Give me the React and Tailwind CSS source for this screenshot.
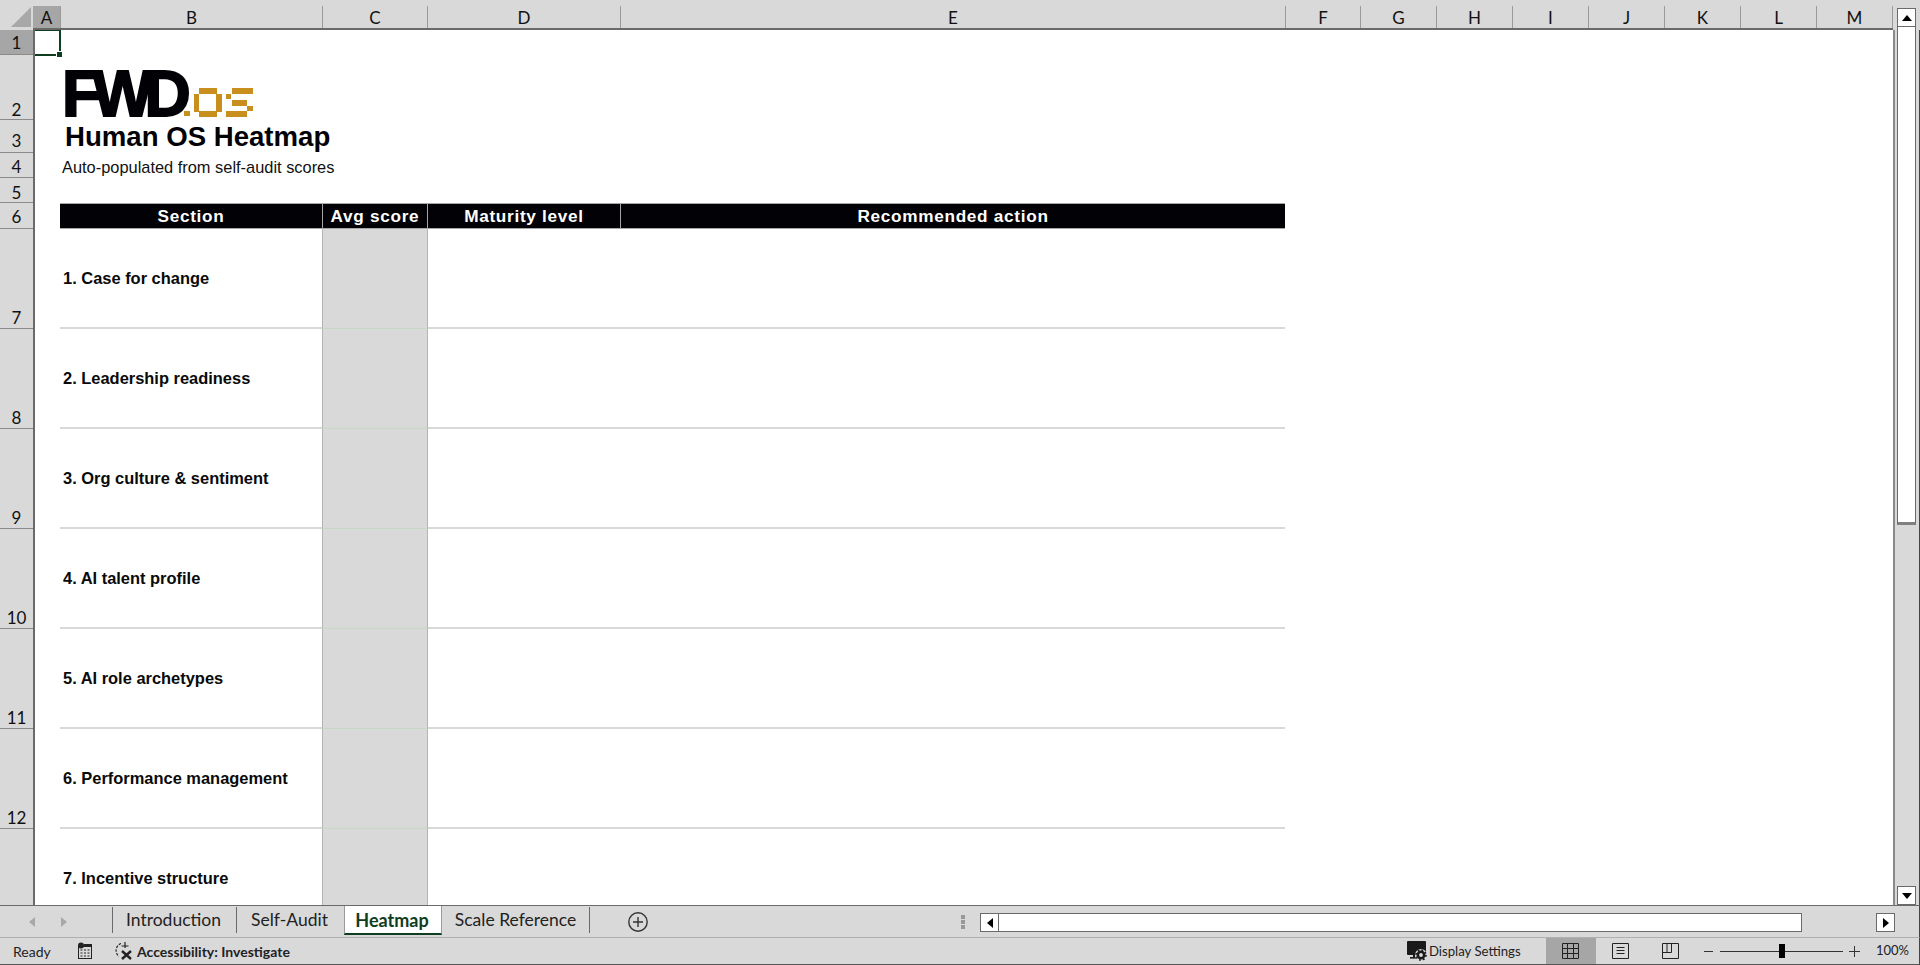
const cols = [
  ["A", 28], ["B", 262], ["C", 105], ["D", 193], ["E", 665], ["F", 75], ["G", 76], ["H", 76], ["I", 76], ["J", 76], ["K", 76], ["L", 76], ["M", 76],
];
const rowHeads = [
  ["1", 25, 3, true], ["2", 65, 1], ["3", 33, 3], ["4", 25, 2], ["5", 25, 1], ["6", 26, 3], ["7", 100, 2], ["8", 100, 2], ["9", 100, 2], ["10", 100, 2], ["11", 100, 2], ["12", 100, 2],
];
const sections = ["1. Case for change", "2. Leadership readiness", "3. Org culture & sentiment", "4. AI talent profile", "5. AI role archetypes", "6. Performance management", "7. Incentive structure"];
const heads = [["Section", 263], ["Avg score", 105], ["Maturity level", 193], ["Recommended action", 664]];

function Arrow({ dir, className = "" }) {
  const pts = { up: "0,6 5,0 10,6", down: "0,0 5,6 10,0", left: "6,0 0,5 6,10", right: "0,0 6,5 0,10" }[dir];
  const wide = dir === "up" || dir === "down";
  return <svg width={wide ? 10 : 6} height={wide ? 6 : 10} viewBox={wide ? "0 0 10 6" : "0 0 6 10"} className={className}><polygon points={pts} fill="currentColor" /></svg>;
}

function Seg({ x, y, w, h }) {
  const horizontal = w >= h;
  return (
    <g>
      <rect x={x} y={y} width={w} height={h} fill="#c98f1e" />
      {horizontal
        ? <rect x={x + 1} y={y + h / 2 - 0.7} width={w - 2} height="1.4" fill="#8f5c0a" />
        : <rect x={x + w / 2 - 0.7} y={y + 1} width="1.4" height={h - 2} fill="#8f5c0a" />}
    </g>
  );
}

function Logo() {
  return (
    <div className="flex items-start h-[48px] relative">
      <span className="font-['Liberation_Sans'] font-bold text-[64px] leading-[50px] tracking-[-8.5px] text-[#020206] [-webkit-text-stroke:2px_#020206] h-[48px] w-[122px] block">FWD</span>
      <svg width="70" height="30" viewBox="0 0 70 30" className="mt-[19px]">
        <Seg x="0" y="23" w="6" h="5" />
        <Seg x="15" y="0" w="18" h="6" />
        <Seg x="10" y="6" w="5" h="18" />
        <Seg x="32" y="6" w="6" h="18" />
        <Seg x="15" y="23" w="18" h="6" />
        <Seg x="42" y="6" w="5" h="5" />
        <Seg x="48" y="0" w="21" h="6" />
        <Seg x="48" y="12" w="15" h="6" />
        <Seg x="63" y="18" w="6" h="5" />
        <Seg x="42" y="23" w="21" h="6" />
      </svg>
    </div>
  );
}

export default function App() {
  return (
    <div className="w-[1920px] h-[965px] overflow-hidden bg-[#d9d9d9] flex flex-col font-['Lato',sans-serif] text-[#111]">
      <div className="flex h-[30px] shrink-0">
        <div className="w-[33px] h-[29px] relative shrink-0">
          <svg width="20" height="20" viewBox="0 0 20 20" className="absolute left-[11px] top-[7px]"><polygon points="20,0 20,20 0,20" fill="#a8a8a8" /></svg>
        </div>
        <div className="flex h-[30px] w-[1860px] border-b-2 border-[#6a6a6a] shrink-0">
          {cols.map(([c, w], i) => (
            <div key={c} style={{ width: w }} className={`mt-[6px] flex items-center justify-center text-[17px] leading-none shrink-0 border-r border-[#9a9a9a] pt-[1px] ${i === 0 ? "bg-[#a6a6a6]" : ""}`}>{c}</div>
          ))}
        </div>
        <div className="ml-[4px] mt-[8px] w-[19px] h-[19px] bg-white border border-[#6a6a6a] flex items-center justify-center shrink-0 text-black"><Arrow dir="up" /></div>
      </div>

      <div className="flex h-[875px] shrink-0 border-r border-[#444]">
        <div className="w-[33px] border-r-2 border-[#6a6a6a] flex flex-col shrink-0 box-content -mr-[2px] relative">
          {rowHeads.map(([r, h, pb, active]) => (
            <div key={r} style={{ height: h, paddingBottom: pb }} className={`flex items-end justify-center text-[17px] leading-none border-b border-[#8a8a8a] w-[33px] shrink-0 ${active ? "bg-[#a6a6a6]" : ""}`}>{r}</div>
          ))}
        </div>

        <div className="w-[1858px] ml-[2px] bg-white shrink-0 overflow-hidden relative">
          <div className="absolute left-[-2px] top-[-1px] w-[28px] h-[27px] border-2 border-[#0f3d1f]">
            <div className="absolute right-[-4px] bottom-[-4px] w-[5px] h-[5px] bg-[#0f3d1f] border border-white box-content" />
          </div>
          <div className="h-[25px]" />
          <div className="h-[65px] flex items-end pl-[27px]"><div className="pb-[3px]"><Logo /></div></div>
          <div className="h-[33px] pl-[30px] flex items-center font-['Liberation_Sans'] font-bold text-[27.6px] leading-none text-[#020206]">Human OS Heatmap</div>
          <div className="h-[25px] pl-[27px] pt-[4px] flex items-center font-['Liberation_Sans'] text-[16.4px] leading-none text-[#111]">Auto-populated from self-audit scores</div>
          <div className="h-[25px]" />
          <div className="flex h-[26px] ml-[25px] bg-[#020206] border-y border-[#a6a6a6] w-[1225px]">
            {heads.map(([t, w], i) => (
              <div key={t} style={{ width: w }} className={`flex items-center justify-center pt-[2px] font-['Liberation_Sans'] font-bold text-white text-[17.2px] tracking-[0.7px] shrink-0 ${i < 3 ? "border-r border-[#a6a6a6]" : ""}`}>{t}</div>
            ))}
          </div>
          {sections.map((s) => (
            <div key={s} className="flex h-[100px] ml-[25px] w-[1225px] border-b-2 border-[#d9d9d9] relative">
              <div className="w-[262px] h-[100px] shrink-0 flex items-center pl-[3px] pb-[2px] font-['Liberation_Sans'] font-bold text-[16.45px] text-[#0a0a0a]">{s}</div>
              <div className="w-[106px] h-[100px] shrink-0 bg-[#d9d9d9] border-x border-x-[#b4b4b4] border-b border-b-[#c6d8c6]" />
            </div>
          ))}
        </div>

        <div className="w-[26px] shrink-0 flex flex-col border-l-2 border-[#8a8a8a] pl-[2px]">
          <div className="w-[19px] h-[498px] bg-white border border-[#6a6a6a] border-b-[3px] border-b-[#808080] border-t-0 mt-[-3px]" />
          <div className="flex-1" />
          <div className="w-[19px] h-[19px] bg-white border border-[#6a6a6a] flex items-center justify-center text-black"><Arrow dir="down" /></div>
        </div>
      </div>

      <div className="h-[32px] shrink-0 flex border-t border-[#6a6a6a] border-r border-r-[#444] relative">
        <div className="w-[112px] flex items-center text-[#a8a8a8] pl-[29px] gap-[26px] shrink-0"><Arrow dir="left" /><Arrow dir="right" /></div>
        <div className="flex items-start h-[28px] text-[17.5px] leading-none text-[#222]">
          <div className="w-[125px] h-[26px] pb-[1px] mt-[1px] pr-[2px] border-x border-[#6a6a6a] flex items-center justify-center">Introduction</div>
          <div className="w-[107px] h-[26px] pb-[1px] mt-[1px] pr-[2px] flex items-center justify-center">Self-Audit</div>
          <div className="w-[98px] h-[29px] pr-[2px] bg-white border-b-[2px] border-[#0f3d1f] border-x border-x-[#9a9a9a] flex items-center justify-center font-bold text-[18px] text-[#0f3d1f]">Heatmap</div>
          <div className="w-[148px] h-[26px] pb-[1px] mt-[1px] border-r border-[#6a6a6a] flex items-center justify-center">Scale Reference</div>
        </div>
        <svg width="22" height="22" viewBox="0 0 22 22" className="ml-[37px] mt-[5px] text-[#333]" fill="none" stroke="currentColor" strokeWidth="1.4"><circle cx="11" cy="11" r="9.2" /><path d="M11 6v10M6 11h10" /></svg>
        <div className="ml-[312px] mt-[9px] flex flex-col gap-[1px] w-[4px]">
          <span className="w-[4px] h-[4px] bg-[#999]" /><span className="w-[4px] h-[4px] bg-[#999]" /><span className="w-[4px] h-[4px] bg-[#999]" />
        </div>
        <div className="ml-[15px] mt-[7px] w-[19px] h-[19px] bg-white border border-[#6a6a6a] flex items-center justify-center text-black"><Arrow dir="left" /></div>
        <div className="mt-[7px] w-[803px] h-[19px] bg-white border border-l-0 border-[#6a6a6a]" />
        <div className="ml-[74px] mt-[7px] w-[19px] h-[19px] bg-white border border-[#6a6a6a] flex items-center justify-center text-black"><Arrow dir="right" /></div>
      </div>

      <div className="h-[28px] shrink-0 flex items-center border-t border-[#b0b0b0] border-b border-b-[#555] border-r border-r-[#444] text-[14px] text-[#222] relative">
        <span className="ml-[13px] w-[62px]">Ready</span>
        <svg width="16" height="18" viewBox="0 0 16 18" className="ml-[2px] text-[#222]" fill="none" stroke="currentColor"><rect x="1.5" y="4.5" width="13" height="12" /><circle cx="4" cy="3.5" r="3" fill="currentColor" stroke="none" /><rect x="7" y="2" width="8" height="3" fill="currentColor" stroke="none" /><path d="M3.5 8h9M3.5 11h9M3.5 14h9" strokeDasharray="2 1.5" /></svg>
        <svg width="20" height="20" viewBox="0 0 20 20" className="ml-[21px] text-[#222]" fill="none" stroke="currentColor" strokeWidth="1.2"><path d="M7 2.5a7.5 7.5 0 0 0-2 13" strokeDasharray="2.5 1.4" /><path d="M11 1v6M7.5 5h7" /><path d="M8 10l9 8M17 10l-9 8" strokeWidth="2.4" /></svg>
        <span className="ml-[3px] font-bold">Accessibility: Investigate</span>
        <svg width="20" height="20" viewBox="0 0 20 20" className="ml-[1117px] text-[#1a1a1a]" fill="currentColor"><rect x="0" y="0" width="19" height="14" rx="1" /><rect x="3" y="16" width="7" height="1.6" /><rect x="6" y="14" width="2" height="3" /><circle cx="14" cy="14" r="6" fill="#d9d9d9" /><circle cx="14" cy="14" r="3.2" fill="none" stroke="currentColor" strokeWidth="2.6" /><circle cx="14" cy="14" r="5" fill="none" stroke="currentColor" strokeWidth="1.6" strokeDasharray="1.8 2.1" /></svg>
        <span className="ml-[2px] w-[117px] pt-[1px] text-[13.2px]">Display Settings</span>
        <div className="w-[50px] h-[26px] bg-[#a6a6a6] flex items-center justify-center">
          <svg width="17" height="16" viewBox="0 0 17 16" fill="none" stroke="#222"><path d="M.5.5h16v15H.5zM.5 5.5h16M.5 10.5h16M5.5.5v15M11.5.5v15" /></svg>
        </div>
        <svg width="17" height="16" viewBox="0 0 17 16" fill="none" stroke="#222" className="ml-[16px]"><path d="M.5.5h16v15H.5zM4.5 4.5h8M4.5 7.5h8M4.5 10.5h8" /></svg>
        <svg width="17" height="16" viewBox="0 0 17 16" fill="none" stroke="#222" className="ml-[33px]"><path d="M.5.5h16v15H.5zM.5 9.5h9V.5M5 .5v9" /></svg>
        <span className="ml-[25px] w-[9px] h-px bg-[#333]" />
        <div className="ml-[7px] w-[123px] h-px bg-[#333] relative">
          <span className="absolute left-[59px] top-[-7px] w-[6px] h-[14px] bg-black" />
        </div>
        <svg width="11" height="11" viewBox="0 0 11 11" fill="none" stroke="#333" className="ml-[6px]"><path d="M5.5 0v11M0 5.5h11" /></svg>
        <span className="ml-[16px] text-[13px]">100%</span>
      </div>
    </div>
  );
}
